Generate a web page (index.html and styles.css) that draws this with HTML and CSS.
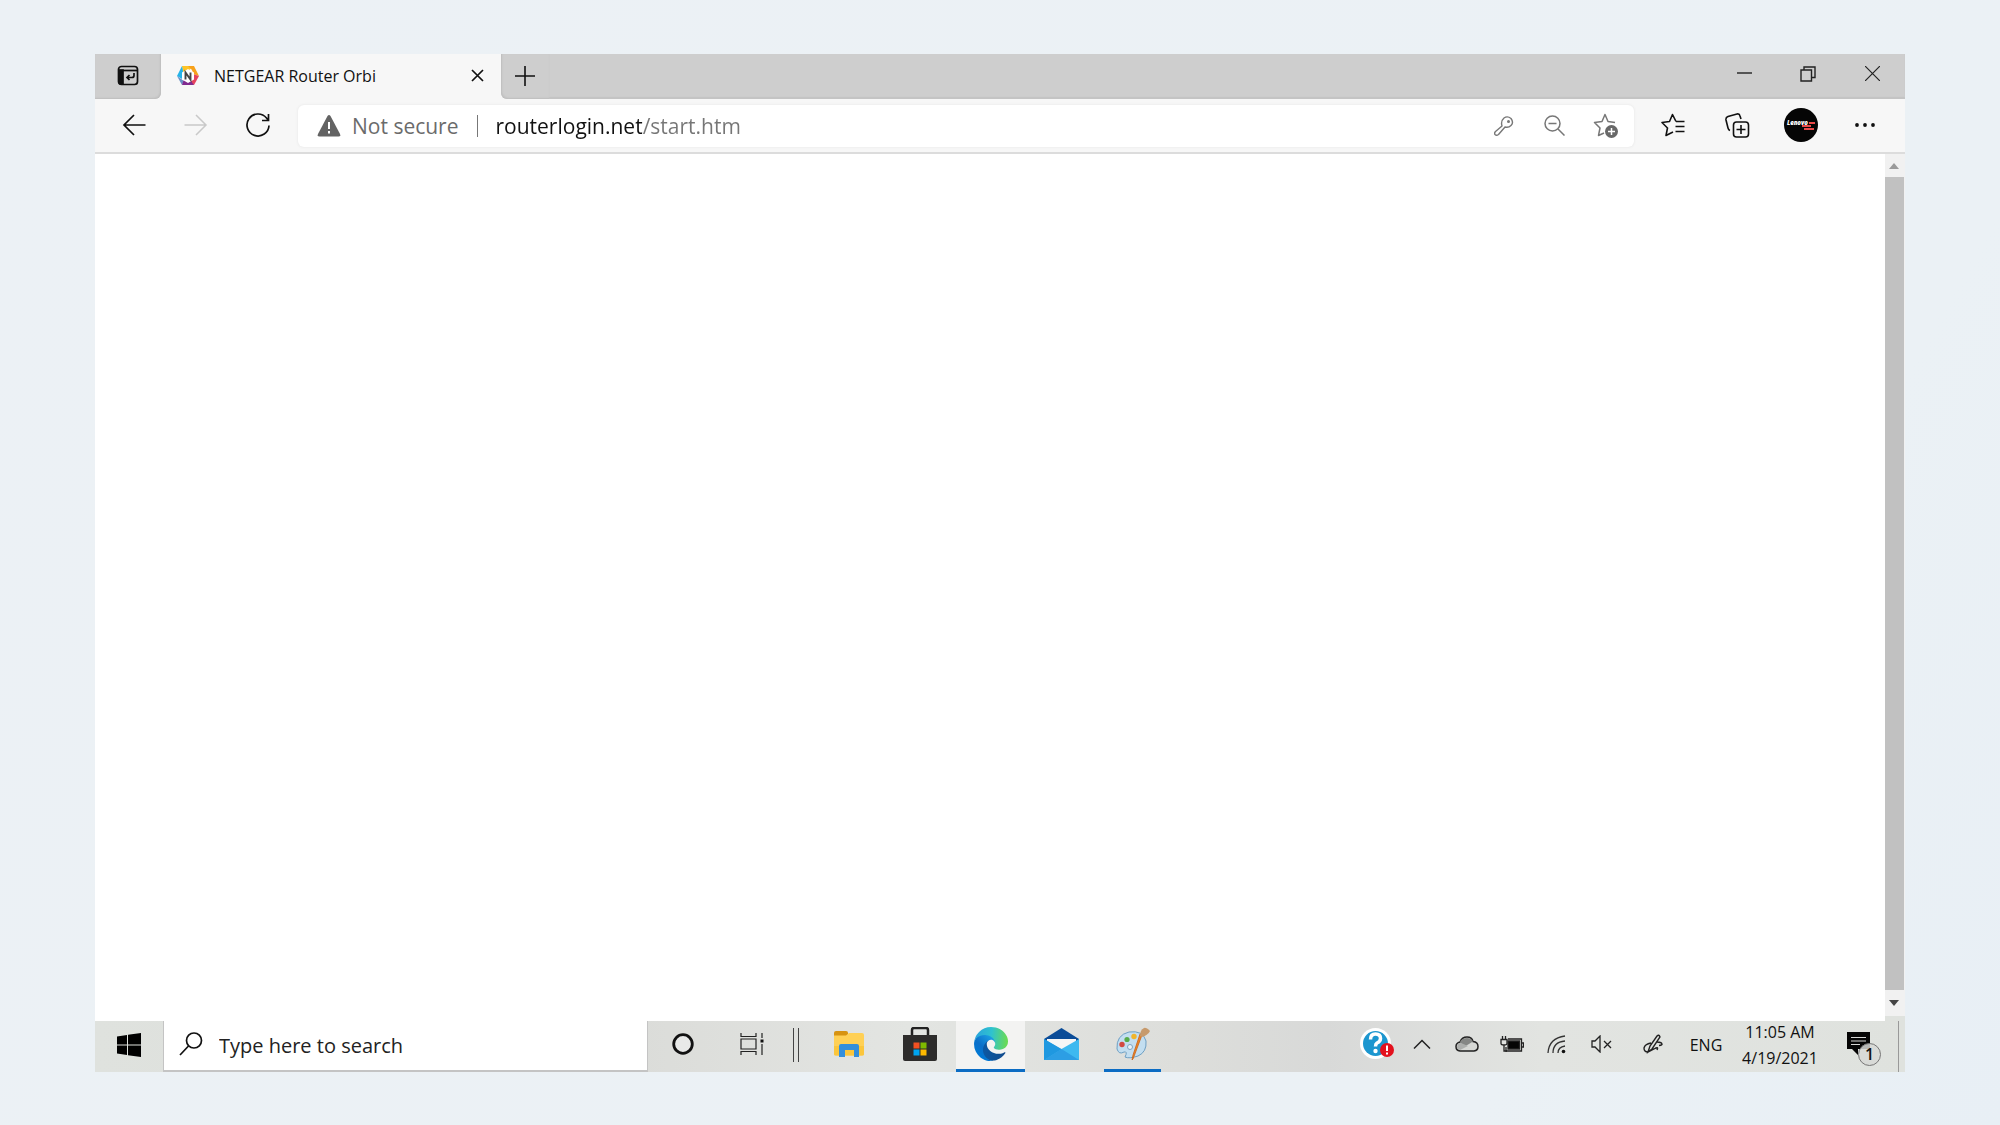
FILE: index.html
```html
<!DOCTYPE html>
<html lang="en">
<head>
<meta charset="utf-8">
<title>NETGEAR Router Orbi</title>
<link rel="stylesheet" href="styles.css">
</head>
<body>
<div class="screen">
  <header class="tabstrip">
    <button class="tab-actions" aria-label="Tab actions">
      <svg width="22" height="22" viewBox="0 0 22 22" fill="none" stroke="#111" stroke-width="1.7"><rect x="1.5" y="1.5" width="19" height="18" rx="3"/><path d="M2 5.500h18"/><path d="M2 5h4v14H4a2 2 0 0 1-2-2z" fill="#111"/><path d="M17 8v2.500q0 2-2 2h-5M12.500 10 10 12.500l2.500 2.500" stroke-width="1.700"/></svg>
    </button>
    <div class="tab">
      <svg width="22" height="22" viewBox="0 0 22 22"><path d="M5 1h12l-6 5-5 2z" fill="#ffc426"/><path d="M11 1h6l5 10-6-2-1-4z" fill="#f7a11b"/><path d="M5 1 0 11l5 3 1-8z" fill="#25b3e8"/><path d="M0 11l5 9 2-4z" fill="#6a8fc6"/><path d="M5 20h12l-1-4-9-2z" fill="#812b8f"/><path d="M22 11l-5 9-3-4 2-7z" fill="#e5425d"/><path d="m11 4 6 3.500v7L11 18l-6-3.500v-7z" fill="#fff"/><path d="M8.500 14.500v-7l5 7v-7" fill="none" stroke="#444" stroke-width="1.900"/></svg>
      <span class="tab-title">NETGEAR Router Orbi</span>
      <button class="tab-close" aria-label="Close tab"><svg width="13" height="13" viewBox="0 0 13 13" stroke="#111" stroke-width="1.700"><path d="m1 1 11 11M12 1 1 12"/></svg></button>
    </div>
    <button class="new-tab" aria-label="New tab"><svg width="20" height="20" viewBox="0 0 20 20" stroke="#111" stroke-width="1.600"><path d="M10 0v20M0 10h20"/></svg></button>
    <div class="window-controls">
      <button aria-label="Minimize"><svg width="15" height="15" viewBox="0 0 15 15" stroke="#222" stroke-width="1.400"><path d="M0 7h15"/></svg></button>
      <button aria-label="Restore"><svg width="16" height="16" viewBox="0 0 16 16" fill="none" stroke="#222" stroke-width="1.400"><path d="M1 4h10.500v11H1zM4 4V1h11v10.500h-3.500"/></svg></button>
      <button aria-label="Close"><svg width="15" height="15" viewBox="0 0 15 15" stroke="#222" stroke-width="1.200"><path d="m0 0 15 15M15 0 0 15"/></svg></button>
    </div>
  </header>

  <nav class="toolbar" aria-label="Browser toolbar">
    <button class="nav-button" aria-label="Back"><svg width="24" height="22" viewBox="0 0 24 22" fill="none" stroke="#111" stroke-width="1.700"><path d="M23.500 11H2M12 1 2 11l10 10"/></svg></button>
    <button class="nav-button" aria-label="Forward" disabled><svg width="24" height="22" viewBox="0 0 24 22" fill="none" stroke="#c9c9c9" stroke-width="1.500"><path d="M.5 11H22M12 1l10 10-10 10"/></svg></button>
    <button class="nav-button" aria-label="Refresh"><svg width="26" height="26" viewBox="0 0 26 26" fill="none" stroke="#111" stroke-width="1.700"><path d="M24 13.500A11 11 0 1 1 21.500 6l2 2.500M23.500 2v6.500H17"/></svg></button>
    <form class="address-bar">
      <svg class="warn" width="24" height="22" viewBox="0 0 24 22"><path d="M10.500 1q1.500-2 3 0l9.500 18q1 2.500-1.500 2.500h-19Q0 21.500 1 19z" fill="#636363"/><path d="M12 7v7M12 16v2.500" stroke="#fff" stroke-width="2"/></svg>
      <label class="security" for="url">Not secure</label>
      <span class="divider"></span>
      <input class="url" id="url" type="text" value="routerlogin.net/start.htm">
      <button type="button" aria-label="Saved passwords"><svg width="20" height="20" viewBox="0 0 20 20" fill="none" stroke="#777" stroke-width="1.400"><path d="M8 10Q6.500 5 10 2q3.500-2.500 7 .5 3 4 0 7-2.500 2.500-6 1.500l-6.500 7.500q-2 1.500-3.500 0-1-1.500.5-3z" stroke-linejoin="round"/><circle cx="14.500" cy="5.500" r=".8"/></svg></button>
      <button type="button" aria-label="Zoom out"><svg width="21" height="21" viewBox="0 0 21 21" fill="none" stroke="#777" stroke-width="1.500"><circle cx="8.500" cy="8.500" r="7.500"/><path d="m14 14 6.500 6.500M4.500 8.500h8"/></svg></button>
      <button type="button" aria-label="Add to favorites"><svg width="25" height="25" viewBox="0 0 25 25" fill="none" stroke="#777" stroke-width="1.500" stroke-linejoin="round"><path d="M22 9.500l-7-1L12 1.500 9 8.500l-7.500 1L7 15 5.500 22.500 11 20"/><circle cx="18.500" cy="18.500" r="6.500" fill="#686868" stroke="none"/><path d="M18.500 15v7M15 18.500h7" stroke="#fff"/></svg></button>
    </form>
    <div class="tools">
      <button aria-label="Favorites"><svg width="24" height="24" viewBox="0 0 24 24" fill="none" stroke="#111" stroke-width="1.600" stroke-linejoin="round"><path d="M15 8.500 11.500 1.500 8.500 8.500l-7.500 1L6.500 15 5 22.500l7-3.500M15 8.500h8.500M14.500 13.500h9M14.500 18.500h9"/></svg></button>
      <button aria-label="Collections"><svg width="25" height="25" viewBox="0 0 25 25" fill="none" stroke="#111" stroke-width="1.600"><rect x="8.500" y="9" width="15" height="15" rx="3"/><path d="M16 12v9M11.500 16.500h9M5 17.500Q3.500 17 3 15L1 7Q.5 4.500 3 3.500L12 1q2.500-.5 3 2l1 3"/></svg></button>
      <button aria-label="Profile"><svg width="34" height="34" viewBox="0 0 34 34"><circle cx="17" cy="17" r="17" fill="#050505"/><text x="3" y="17" class="avatar-text">Lenovo</text><path d="M25 14h6v2h-6zM18 17h9v2h-9zM20 20h10v2H20z" fill="#e94a48"/></svg></button>
      <button aria-label="Settings and more"><svg width="20" height="4" viewBox="0 0 20 4" fill="#111"><circle cx="2" cy="2" r="1.900"/><circle cx="10" cy="2" r="1.900"/><circle cx="18" cy="2" r="1.900"/></svg></button>
    </div>
  </nav>

  <div class="viewport">
    <main class="page"></main>
    <div class="scrollbar">
      <span class="arrow"><svg width="10" height="6" viewBox="0 0 10 6"><path d="M0 6 5 0l5 6z" fill="#9a9a9a"/></svg></span>
      <span class="thumb"></span>
      <span class="arrow arrow-down"><svg width="10" height="6" viewBox="0 0 10 6"><path d="M0 0h10L5 6z" fill="#444"/></svg></span>
    </div>
  </div>

  <footer class="taskbar">
    <button class="start" aria-label="Start"><svg width="24" height="24" viewBox="0 0 24 24"><path d="M0 3.500 10 2v9.500H0zM11 1.800 24 0v11.500H11zM0 12.500h10V22L0 20.500zM11 12.500h13V24l-13-1.800z"/></svg></button>
    <label class="search">
      <svg width="24" height="24" viewBox="0 0 24 24" fill="none" stroke="#111" stroke-width="1.700"><circle cx="15" cy="8.500" r="7.500"/><path d="M9.500 14 1 23"/></svg>
      <input type="text" placeholder="Type here to search" aria-label="Type here to search">
    </label>
    <button class="app" aria-label="Cortana"><svg width="22" height="22" viewBox="0 0 22 22"><circle cx="11" cy="11" r="9.300" fill="#e8e9e8" stroke="#111" stroke-width="2.800"/></svg></button>
    <button class="app" aria-label="Task view"><svg width="24" height="22" viewBox="0 0 24 22" fill="none" stroke="#222" stroke-width="1.200"><path d="M1 0v3.500h15V0M1 22v-3.500h15V22M1 6h15v10H1zM22 0v5M22 11v11"/><path d="M20.500 6.500h3v3h-3z" fill="#111" stroke="none"/></svg></button>
    <span class="grip"></span>
    <div class="apps">
      <button class="app" aria-label="File Explorer"><svg width="30" height="26" viewBox="0 0 30 26"><path d="M0 2q0-2 2-2h10q2 0 2 2v4H0z" fill="#d79311"/><path d="M0 4.500h12L15 2h13q2 0 2 2v19q0 1.500-2 1.500H2q-2 0-2-1.500z" fill="#ffd055"/><path d="M0 15h30v8q0 1.500-2 1.500H2q-2 0-2-1.500z" fill="#fbc63c"/><path d="M5 26V15q0-2 2-2h16q2 0 2 2v11h-5v-7h-9v7z" fill="#338fdc"/></svg></button>
      <button class="app" aria-label="Microsoft Store"><svg width="34" height="34" viewBox="0 0 34 34"><path d="M9 10V3q0-2 2-2h12q2 0 2 2v7" fill="none" stroke="#222" stroke-width="2.500"/><path d="M0 8h34v24q0 2-2 2H2q-2 0-2-2z" fill="#2d2c2b"/><path d="M10.500 15.500h6v6h-6z" fill="#f25022"/><path d="M17.500 15.500h6v6h-6z" fill="#7fba00"/><path d="M10.500 22.500h6v6h-6z" fill="#00a4ef"/><path d="M17.500 22.500h6v6h-6z" fill="#ffb900"/></svg></button>
      <button class="app app-active" aria-label="Microsoft Edge"><svg width="34" height="34" viewBox="0 0 256 256"><defs>
        <linearGradient id="e1" x1="63" y1="177" x2="242" y2="177" gradientUnits="userSpaceOnUse"><stop stop-color="#0c59a4"/><stop offset="1" stop-color="#114a8b"/></linearGradient>
        <linearGradient id="e2" x1="157" y1="100" x2="46" y2="221" gradientUnits="userSpaceOnUse"><stop stop-color="#1b9de2"/><stop offset=".6" stop-color="#0b6fc9"/><stop offset="1" stop-color="#0078d4"/></linearGradient>
        <linearGradient id="e3" x1="15" y1="70" x2="245" y2="90" gradientUnits="userSpaceOnUse"><stop stop-color="#2aa6dc"/><stop offset=".5" stop-color="#2fc2cf"/><stop offset="1" stop-color="#67da58"/></linearGradient></defs>
        <path fill="url(#e1)" d="M231 190.500c-3.400 1.800-6.900 3.400-10.500 4.700a101.900 101.900 0 0 1-35.900 6.500c-47.300 0-88.500-32.500-88.500-74.300.1-11.400 6.400-21.900 16.400-27.300-42.800 1.800-53.800 46.400-53.800 72.500 0 73.900 68.100 81.400 82.800 81.400 7.900 0 19.800-2.300 27-4.600l1.300-.4a128.300 128.300 0 0 0 66.600-52.800 4 4 0 0 0-5.400-5.700z"/>
        <path fill="url(#e2)" d="M105.700 241.400a79.200 79.200 0 0 1-22.700-21.300 80.700 80.700 0 0 1 29.500-120c3.200-1.500 8.500-4.100 15.600-4 10.100.1 19.600 4.900 25.700 13 4 5.400 6.300 11.900 6.400 18.700 0-.2 24.500-79.600-80-79.600-43.900 0-80 41.700-80 78.200a130.200 130.200 0 0 0 12.100 56c28.600 61 98.200 90.700 162 69.200a75.600 75.600 0 0 1-68.600-10.200z"/>
        <path fill="url(#e3)" d="M152.300 148.900c-.8 1-3.300 2.500-3.300 5.700 0 2.600 1.700 5.100 4.700 7.200 14.400 10 41.500 8.700 41.600 8.700 10.700 0 21.100-2.900 30.300-8.300A61.400 61.400 0 0 0 256 109.200c.3-22.400-8-37.300-11.300-43.900C223.500 23.900 177.700 0 128 0A128 128 0 0 0 0 126.200c.5-36.500 36.800-66 80-66 3.500 0 23.500.3 42 10 16.300 8.600 24.900 19 30.800 29.200 6.200 10.700 7.300 24.100 7.300 29.500 0 5.300-2.700 13.300-7.800 20z"/></svg></button>
      <button class="app" aria-label="Mail"><svg width="35" height="32" viewBox="0 0 35 32"><path d="M0 11 17.500 0 35 11v3H0z" fill="#0a4c98"/><path d="M3 11h29v12H3z" fill="#f6f6f6"/><path d="M0 11v21h35z" fill="#2ba6e8"/><path d="M0 32h35V11L17.500 21z" fill="#3db9f0"/><path d="M0 11v21l17.500-11z" fill="#1f98e0"/><path d="M17.500 21 35 32H0z" fill="#2c9ee4"/></svg></button>
      <button class="app app-open" aria-label="Paint"><svg width="34" height="34" viewBox="0 0 34 34"><path d="M1 22Q0 8 13 5q14-2 17 9 1 11-8 15-9 3-13 1 3-6-1-5-5 3-7-3z" fill="#c3def0" stroke="#6d9fc4"/><circle cx="14" cy="20" r="2.500" fill="#eef4f8" stroke="#7da6c4"/><circle cx="6" cy="17.500" r="2.700" fill="#d24a42"/><circle cx="11" cy="12.500" r="2.600" fill="#57ac4b"/><circle cx="18" cy="9.500" r="2.700" fill="#f0b52c"/><path d="M26 8 17 32l-1 1 1-5 7-21z" fill="#ee8424" stroke="#c8651a" stroke-width=".8"/><path d="M24 9Q24 3 28 1q2-1 6 3-2 4-8 6z" fill="#c79a6c"/></svg></button>
    </div>
    <div class="tray">
      <button class="tray-icon" aria-label="Get help"><svg width="34" height="32" viewBox="0 0 34 32"><circle cx="15.500" cy="15.500" r="15.500" fill="#fff"/><circle cx="15.500" cy="15.500" r="12.500" fill="#1c96cf"/><path d="M10.500 11.500q0-5.500 5-5.500t5 4.500q0 3-3.500 4.500-1.500 1-1.500 3.500" fill="none" stroke="#fff" stroke-width="3.500"/><circle cx="15.500" cy="23" r="2.200" fill="#fff"/><circle cx="27" cy="22" r="7" fill="#e3111d"/><path d="M27 17.500v5.500M27 24.500v2" stroke="#fff" stroke-width="2"/></svg></button>
      <button class="tray-icon" aria-label="Show hidden icons"><svg width="18" height="10" viewBox="0 0 18 10" fill="none" stroke="#222" stroke-width="1.500"><path d="m1 9.500 8-8 8 8"/></svg></button>
      <button class="tray-icon" aria-label="OneDrive"><svg width="24" height="16" viewBox="0 0 24 16"><path d="M5 15q-4-.5-4-4.500 0-3.500 4-4.500Q7 1 12 1q5 0 6 4.500 5 .5 5 5 0 4-4 4.500z" fill="#d6d8d5" stroke="#222" stroke-width="1.500"/><path d="M5 6q2-4 7-4 4 0 6 3.500L9 11z" fill="#858785"/><path d="M2 12q0-5 4-5l7 3-8 4z" fill="#adafad"/></svg></button>
      <button class="tray-icon" aria-label="Battery"><svg width="24" height="16" viewBox="0 0 24 16" fill="none" stroke="#222" stroke-width="1.300"><path d="M8 3h13.500v12H6V11M22 7h1.500v4H22"/><path d="M8 5h11.500v8H8z" fill="#050505"/><path d="M1 3.500h6v4Q7 9 4 9T1 7.500zM2.500 0v3M5.500 0v3M4 9v6h3"/></svg></button>
      <button class="tray-icon" aria-label="Network"><svg width="19" height="19" viewBox="0 0 19 19" fill="none" stroke="#333" stroke-width="1.300"><path d="M1 18Q2 3 18 1M6 18Q6 7 18 6M11 18q0-6 7-7"/><circle cx="16.500" cy="16.500" r="1.800" fill="#111" stroke="none"/></svg></button>
      <button class="tray-icon" aria-label="Volume muted"><svg width="21" height="18" viewBox="0 0 21 18" fill="none" stroke="#222" stroke-width="1.300"><path d="M1 6h3l5-5v16l-5-5H1zM13 6l7 7M20 6l-7 7"/></svg></button>
      <button class="tray-icon tray-wide" aria-label="Windows Ink"><svg width="20" height="20" viewBox="0 0 20 20" fill="none" stroke="#222" stroke-width="1.400"><path d="M5 18 7 12 14 2q2-2 3 1L9 15zM8 9Q2 10 1 14q0 4 4 4l6-3q5-3 3 1M14 8q5 0 5 2.500-1 1-3 1"/></svg></button>
      <button class="language">ENG</button>
      <button class="clock"><time>11:05 AM</time><time>4/19/2021</time></button>
      <button class="notifications" aria-label="Notifications"><svg width="23" height="24" viewBox="0 0 23 24"><path d="M0 0h23v17H11v6l-6-6H0z" fill="#050505"/><path d="M4 5.500h15M4 9h15M4 12.500h9" stroke="#d5d6d4" stroke-width="1.200"/></svg><span class="badge">1</span></button>
      <button class="show-desktop" aria-label="Show desktop"></button>
    </div>
  </footer>
</div>
</body>
</html>
```
FILE: styles.css
```css
* { box-sizing: border-box; }

body {
  margin: 0;
  min-height: 100vh;
  padding: 54px 95px 53px;
  display: flex;
  background: linear-gradient(120deg, #ecf1f5 0%, #ebf1f5 80%, #e8eff5 100%);
  font-family: "Open Sans", "Noto Sans", sans-serif;
  color: #111;
}

button {
  display: flex;
  align-items: center;
  justify-content: center;
  padding: 0;
  border: 0;
  background: none;
  color: inherit;
  font: inherit;
}

input {
  min-width: 0;
  padding: 0;
  border: 0;
  outline: 0;
  background: none;
  font: inherit;
}

svg { display: block; flex: none; }

.screen {
  flex: 1;
  min-width: 0;
  display: flex;
  flex-direction: column;
  background: #fff;
}

/* Tab strip */
.tabstrip {
  display: flex;
  height: 45px;
  background: #f7f7f7;
}

.tab-actions {
  width: 66px;
  padding-bottom: 1px;
  background: #cecece;
  border-bottom-right-radius: 6px;
  box-shadow: inset -1px -1px 2px #bdbdbd;
}

.tab {
  display: flex;
  align-items: center;
  width: 340px;
  padding: 0 17px 2px 16px;
  border-radius: 6px 6px 0 0;
}

.tab-title {
  flex: 1;
  margin-left: 15px;
  font-size: 16px;
  line-height: 22px;
}

.new-tab {
  width: 48px;
  padding-bottom: 2px;
  background: #cecece;
  border-bottom-left-radius: 6px;
  box-shadow: inset 1px -1px 2px #bdbdbd;
}

.window-controls {
  flex: 1;
  display: flex;
  justify-content: flex-end;
  padding: 0 1px 6px 0;
  background: #cecece;
  box-shadow: inset 0 -2px 1px #c4c4c4;
}

.window-controls button { width: 64px; }

/* Toolbar */
.toolbar {
  display: flex;
  align-items: center;
  height: 55px;
  padding: 0 8px;
  border-bottom: 2px solid #dcdcdc;
  background: #f7f7f7;
}

.nav-button { width: 62px; height: 42px; padding-bottom: 2px; }

.address-bar {
  flex: 1;
  display: flex;
  align-items: center;
  height: 42px;
  margin-left: 9px;
  padding: 0 3px 0 19px;
  border-radius: 6px;
  background: #fff;
  box-shadow: 0 0 3px #e4e4e4;
  font-size: 21px;
  line-height: 30px;
}

.address-bar button { width: 51px; height: 42px; }

.security { margin-left: 11px; color: #6b6b6b; }

.divider {
  width: 1px;
  height: 22px;
  margin: 0 18px;
  background: #777;
}

/* Host is drawn dark and the path after it grey */
.url {
  flex: 1;
  height: 30px;
  background: linear-gradient(90deg, #111 146px, #767676 146px);
  -webkit-background-clip: text;
  background-clip: text;
  color: transparent;
}

.tools { display: flex; margin-left: 7px; }
.tools button { width: 64px; height: 42px; padding-bottom: 1px; }

.avatar-text {
  fill: #fff;
  font-size: 6px;
  font-weight: 800;
  font-style: italic;
}

/* Page area */
.viewport { flex: 1; display: flex; }
.page { flex: 1; background: #fff; }

.scrollbar {
  display: flex;
  flex-direction: column;
  width: 20px;
  border-bottom: 5px solid #dfe2de;
  background: #f1f1f1;
}

.arrow {
  display: flex;
  align-items: center;
  justify-content: center;
  height: 23px;
  padding-right: 2px;
}

.arrow-down { height: 26px; }
.thumb { flex: 1; margin-right: 1px; background: #c1c1c1; }

/* Taskbar */
.taskbar {
  display: flex;
  height: 51px;
  background: linear-gradient(90deg, #dfe2de 0%, #dbdcd9 30%, #e3e5e2 45%, #dddedb 60%, #d8d9d8 68%, #e2e4e1 80%, #dfe2de 100%);
}

.start { width: 68px; padding-bottom: 4px; }

.search {
  display: flex;
  align-items: center;
  width: 485px;
  padding-left: 15px;
  border: solid #c4c4c4;
  border-width: 0 1px 2px;
  background: #fff;
}

.search svg { margin-bottom: 3px; }

.search input {
  flex: 1;
  height: 30px;
  margin-left: 16px;
  font-size: 20px;
}

.search input::placeholder { color: #222; opacity: 1; }

.app { width: 69px; padding-bottom: 5px; }

.grip {
  align-self: center;
  width: 6px;
  height: 34px;
  margin: 0 15px 4px 7px;
  border: solid #444;
  border-width: 0 1px;
}

.apps { display: flex; gap: 2px; }

.app-active {
  padding-bottom: 2px;
  border-bottom: 3px solid #0b6cc4;
  background: #f3f3f2;
}

.app-open {
  width: 57px;
  margin: 0 6px;
  padding-bottom: 2px;
  border-bottom: 3px solid #0b6cc4;
}

.tray {
  flex: 1;
  display: flex;
  justify-content: flex-end;
  font-size: 16px;
}

.tray-icon { width: 45px; padding-bottom: 5px; }
.tray-wide { width: 58px; }
.language { width: 48px; padding-bottom: 4px; }

.clock {
  flex-direction: column;
  width: 100px;
  line-height: 26px;
  padding-bottom: 4px;
}

.notifications {
  position: relative;
  width: 68px;
  padding: 0 12px 6px 0;
}

.badge {
  position: absolute;
  right: 17px;
  bottom: 6px;
  width: 23px;
  height: 23px;
  border: 1px solid #777;
  border-radius: 50%;
  background: rgb(215 216 214 / 85%);
  font-size: 16px;
  font-weight: 600;
  line-height: 21px;
  text-align: center;
}

.show-desktop { width: 7px; border-left: 1px solid #999; }
```
